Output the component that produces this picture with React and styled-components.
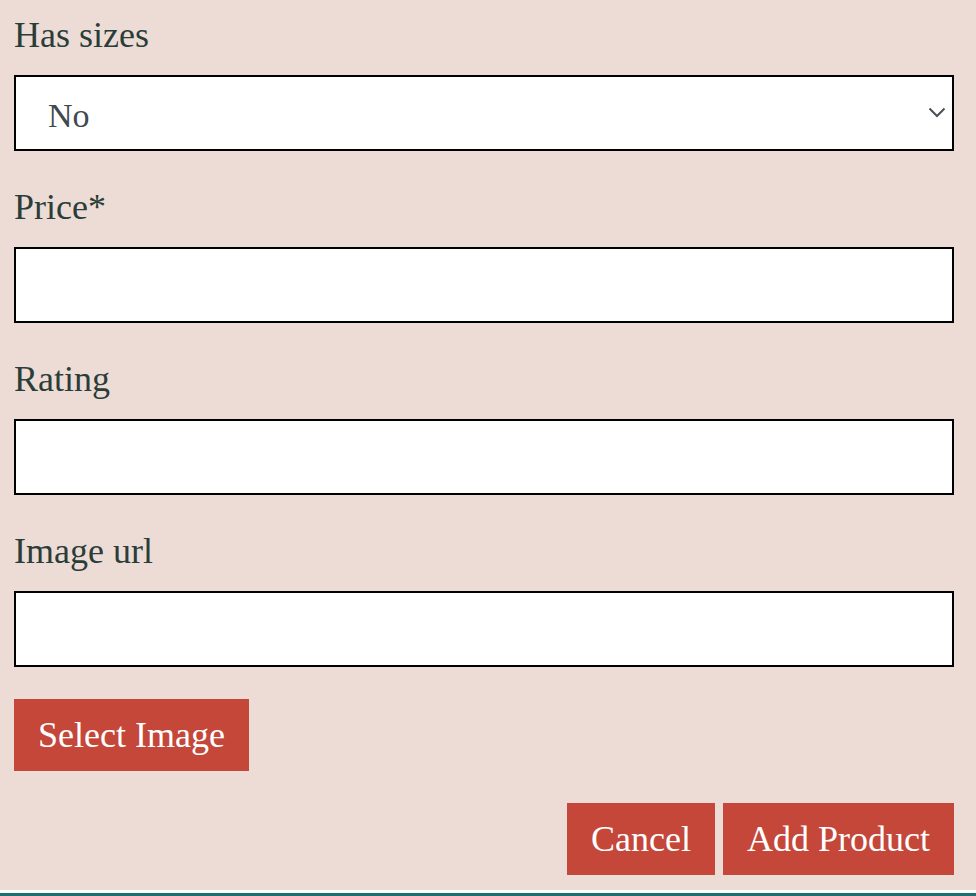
import styled, { createGlobalStyle } from 'styled-components'

const GlobalStyle = createGlobalStyle`
    html, body {
        margin: 0;
        padding: 0;
        background-color: #eddcd5;
        font-family: "Liberation Serif", "Times New Roman", serif;
    }
`;

const Container = styled.div`
    min-height: 896px;
    display: flex;
    flex-direction: column;
`;

const Form = styled.form`
    padding: 13px 22px 0px 14px;
    display: flex;
    flex-direction: column;
`;

// one label + field
const Field = styled.div`
    display: flex;
    flex-direction: column;
    margin-bottom: ${props => props.$last ? "32px" : "34px"};
`;

const Label = styled.label`
    font-size: 36px;
    line-height: 44px;
    color: #2b3d39;
    margin-bottom: 18px;
`;

const Input = styled.input`
    box-sizing: border-box;
    height: 76px;
    width: 100%;
    border: 2px solid #000;
    background-color: #fff;
    font-family: inherit;
    font-size: 34px;
    padding: 0px 32px;
    outline: none;
`;

const SelectWrap = styled.div`
    position: relative;
`;

const Select = styled.select`
    box-sizing: border-box;
    height: 76px;
    width: 100%;
    border: 2px solid #000;
    border-radius: 0;
    background-color: #fff;
    appearance: none;
    font-family: inherit;
    font-size: 34px;
    color: #3e4a4f;
    padding: 4px 60px 0px 32px;
    outline: none;
`;

const Chevron = styled.svg`
    position: absolute;
    right: 8px;
    top: 32px;
    width: 18px;
    height: 11px;
    pointer-events: none;
`;

const Button = styled.button`
    box-sizing: border-box;
    height: 72px;
    padding: 0px 24px;
    border: none;
    background-color: #c4473a;
    color: #fff;
    font-family: inherit;
    font-size: 36px;
    line-height: 44px;
    cursor: pointer;
`;

const SelectImage = styled(Button)`
    align-self: flex-start;
    margin-bottom: 32px;
`;

const Actions = styled.div`
    display: flex;
    justify-content: flex-end;
    gap: 8px;
`;

const Footer = styled.div`
    margin-top: 15px;
    height: 40px;
    border-top: 3px solid #fff;
    background-color: #1e6f6e;
`;

const App = () => {
  return (
    <Container>
        <GlobalStyle/>
        <Form onSubmit={e => e.preventDefault()}>
            <Field>
                <Label>Has sizes</Label>
                <SelectWrap>
                    <Select defaultValue="no">
                        <option value="no">No</option>
                        <option value="yes">Yes</option>
                    </Select>
                    <Chevron viewBox="0 0 18 11" fill="none">
                        <path d="M1.5 1.5 L9 9 L16.5 1.5" stroke="#4b5157" strokeWidth="2" />
                    </Chevron>
                </SelectWrap>
            </Field>
            <Field>
                <Label>Price*</Label>
                <Input type="text" />
            </Field>
            <Field>
                <Label>Rating</Label>
                <Input type="text" />
            </Field>
            <Field $last>
                <Label>Image url</Label>
                <Input type="text" />
            </Field>
            <SelectImage type="button">Select Image</SelectImage>
            <Actions>
                <Button type="button">Cancel</Button>
                <Button type="submit">Add Product</Button>
            </Actions>
        </Form>
        <Footer/>
    </Container>
  )
}

export default App
